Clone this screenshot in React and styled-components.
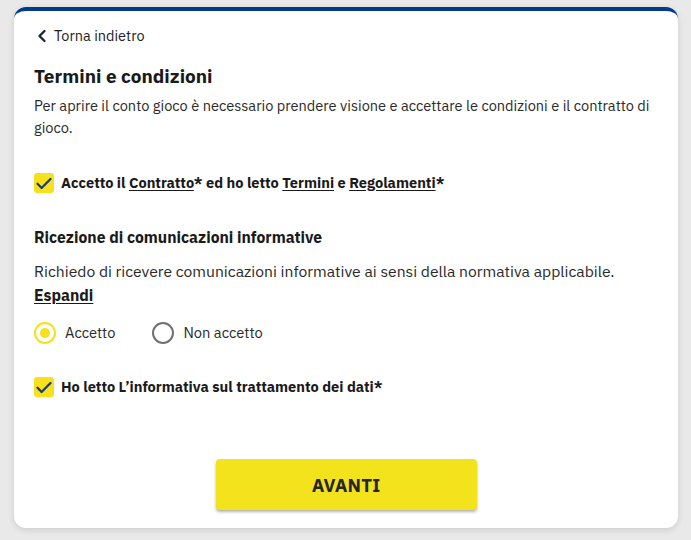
import styled, { createGlobalStyle } from "styled-components";
import { ChevronLeft } from "lucide-react";

const GlobalStyle = createGlobalStyle`
  html, body {
    margin: 0;
    background: #e9e9e9;
  }
  body {
    font-family: "IBM Plex Sans", Roboto, "Noto Sans", sans-serif;
    color: #1c1c1c;
  }
`;

const Page = styled.div`
  padding: 7px 13px 12px 14px;
`;

const Card = styled.div`
  background: #fff;
  border-top: 4px solid #003b8e;
  border-radius: 12px;
  box-shadow: 0 2px 6px rgba(0, 0, 0, 0.12);
  padding: 15px 20px 18px 20px;
`;

const BackLink = styled.a`
  display: flex;
  align-items: center;
  gap: 2px;
  font-size: 14.5px;
  line-height: 20px;
  color: #222;
  text-decoration: none;
  cursor: pointer;
`;

const Title = styled.h1`
  margin: 18px 0 0;
  font-size: 19px;
  line-height: 24px;
  font-weight: 700;
  color: #1a1a1a;
`;

const Text = styled.p`
  margin: ${(p) => p.$mt || 0}px 0 0;
  font-size: ${(p) => p.$size || 14.6}px;
  line-height: ${(p) => p.$lh || 22}px;
  color: #2a2a2a;
`;

const SectionTitle = styled.h2`
  margin: 33px 0 0;
  font-size: 15.7px;
  line-height: 22px;
  font-weight: 700;
  color: #1a1a1a;
`;

const CheckRow = styled.label`
  display: flex;
  align-items: center;
  gap: 7px;
  margin-top: ${(p) => p.$mt}px;
  font-size: 14.6px;
  line-height: 20px;
  font-weight: 700;
  color: #1a1a1a;
  cursor: pointer;
`;

const Box = styled.span`
  width: 20px;
  height: 20px;
  flex: none;
  border-radius: 3px;
  background: #f7e01c;
  display: flex;
  align-items: center;
  justify-content: center;
`;

const Link = styled.a`
  color: inherit;
  text-decoration: underline;
  text-underline-offset: 2px;
`;

const Expand = styled(Link)`
  font-weight: 700;
  color: #1a1a1a;
`;

const RadioGroup = styled.div`
  display: flex;
  gap: 37px;
  margin-top: 15px;
`;

const RadioLabel = styled.label`
  display: flex;
  align-items: center;
  gap: 9px;
  font-size: 14.7px;
  line-height: 22px;
  color: #2a2a2a;
  cursor: pointer;
`;

const Ring = styled.span`
  width: 22px;
  height: 22px;
  box-sizing: border-box;
  border-radius: 50%;
  border: 2px solid ${(p) => (p.$on ? "#f7e01c" : "#707070")};
  display: flex;
  align-items: center;
  justify-content: center;

  &::after {
    content: "";
    width: 10px;
    height: 10px;
    border-radius: 50%;
    background: ${(p) => (p.$on ? "#f7e01c" : "transparent")};
  }
`;

const Footer = styled.div`
  display: flex;
  justify-content: center;
  margin-top: 62px;
`;

const Button = styled.button`
  width: 261px;
  height: 51px;
  border: none;
  border-radius: 4px;
  background: #f3e31c;
  box-shadow: 0 2px 3px rgba(0, 0, 0, 0.3);
  font-family: inherit;
  font-size: 18.5px;
  font-weight: 700;
  letter-spacing: 0.2px;
  color: #262626;
  cursor: pointer;
`;

const Check = () => (
  <Box>
    <svg width="16" height="13" viewBox="0 0 16 13" fill="none">
      <path d="M1.5 6.8 L5.6 11 L14.5 2" stroke="#1e3a7b" strokeWidth="2.3" strokeLinecap="round" strokeLinejoin="round" />
    </svg>
  </Box>
);

export default function App() {
  return (
    <Page>
      <GlobalStyle />
      <Card>
        <BackLink>
          <ChevronLeft size={20} strokeWidth={2.8} color="#1b2440" style={{ marginLeft: -2 }} />
          Torna indietro
        </BackLink>
        <Title>Termini e condizioni</Title>
        <Text $mt={7}>
          Per aprire il conto gioco è necessario prendere visione e accettare le condizioni e il contratto di gioco.
        </Text>
        <CheckRow $mt={34}>
          <Check />
          <span>
            Accetto il <Link>Contratto</Link>* ed ho letto <Link>Termini</Link> e <Link>Regolamenti</Link>*
          </span>
        </CheckRow>
        <SectionTitle>Ricezione di comunicazioni informative</SectionTitle>
        <Text $mt={11} $lh={24} $size={15.7}>
          Richiedo di ricevere comunicazioni informative ai sensi della normativa applicabile.
          <br />
          <Expand>Espandi</Expand>
        </Text>
        <RadioGroup>
          <RadioLabel>
            <Ring $on />
            Accetto
          </RadioLabel>
          <RadioLabel>
            <Ring />
            Non accetto
          </RadioLabel>
        </RadioGroup>
        <CheckRow $mt={33}>
          <Check />
          <span>Ho letto L’informativa sul trattamento dei dati*</span>
        </CheckRow>
        <Footer>
          <Button>AVANTI</Button>
        </Footer>
      </Card>
    </Page>
  );
}
